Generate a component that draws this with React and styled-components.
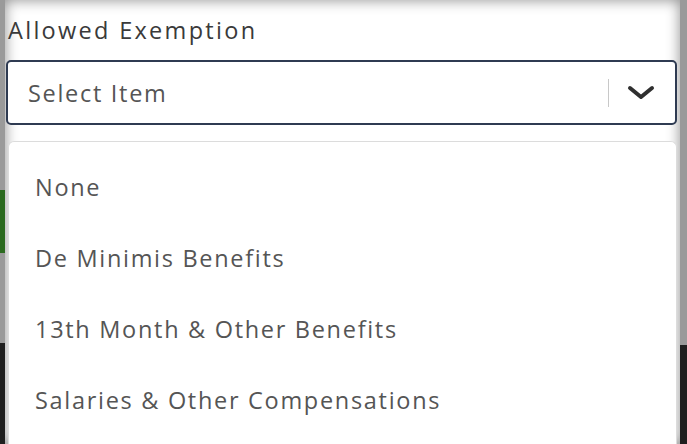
import React from 'react';
import styled, { createGlobalStyle } from 'styled-components';

const options = [
  'None',
  'De Minimis Benefits',
  '13th Month & Other Benefits',
  'Salaries & Other Compensations',
];

const GlobalStyle = createGlobalStyle`
  html, body {
    margin: 0;
    padding: 0;
    background: #222;
  }
  body {
    font-family: "Open Sans", Lato, sans-serif;
  }
`;

const App = () => {
  return (
    <>
      <GlobalStyle />
      <Frame>
        <EdgeStrip>
          <EdgeSegment tone="#9a9a9a" size="190px" />
          <EdgeSegment tone="#2b6a1f" size="63px" />
          <EdgeSegment tone="#9a9a9a" size="90px" />
          <EdgeSegment tone="#1f1f1f" size="1fr" />
        </EdgeStrip>
        <Panel>
          <Label>Allowed Exemption</Label>
          <SelectBox>
            <Placeholder>Select Item</Placeholder>
            <Divider />
            <ChevronWrap>
              <svg width="28" height="16" viewBox="0 0 28 16">
                <path
                  d="M3 3 L14 12 L25 3"
                  fill="none"
                  stroke="#2f2f2f"
                  strokeWidth="4"
                  strokeLinecap="round"
                  strokeLinejoin="round"
                />
              </svg>
            </ChevronWrap>
          </SelectBox>
          <Menu>
            {options.map(option => (
              <MenuItem key={option}>{option}</MenuItem>
            ))}
          </Menu>
        </Panel>
        <EdgeStrip>
          <EdgeSegment tone="#9a9a9a" size="345px" />
          <EdgeSegment tone="#1f1f1f" size="1fr" />
        </EdgeStrip>
      </Frame>
    </>
  );
};

const Frame = styled.div`
  display: grid;
  grid-template-columns: 5px 1fr 7px;
  width: 687px;
  height: 444px;
  overflow: hidden;
`;

const EdgeStrip = styled.div`
  display: flex;
  flex-direction: column;
`;

const EdgeSegment = styled.div`
  background: ${props => props.tone};
  flex: ${props => (props.size === '1fr' ? '1' : `0 0 ${props.size}`)};
`;

const Panel = styled.div`
  display: flex;
  flex-direction: column;
  padding: 15px 3px 0 1px;
  background: #fff;
  box-shadow: inset 0 0 14px rgba(0, 0, 0, 0.45);
  overflow: hidden;
`;

const Label = styled.div`
  padding-left: 2px;
  font-size: 23.5px;
  line-height: 30px;
  color: #3a3a3a;
  letter-spacing: 2.3px;
`;

const SelectBox = styled.div`
  display: flex;
  align-items: center;
  height: 61px;
  margin-top: 15px;
  padding: 0 20px 0 20px;
  border: 2px solid #2f3b52;
  border-radius: 5px;
  background: #fff;
`;

const Placeholder = styled.span`
  flex: 1;
  font-size: 23.5px;
  color: #555;
  letter-spacing: 1.7px;
`;

const Divider = styled.span`
  width: 1px;
  height: 28px;
  background: #c8c8c8;
`;

const ChevronWrap = styled.span`
  display: flex;
  margin-left: 18px;
`;

const Menu = styled.div`
  display: flex;
  flex-direction: column;
  flex: 1;
  margin: 16px 0 0 2px;
  padding-top: 9px;
  border: 1px solid #dcdcdc;
  border-bottom: none;
  border-radius: 6px 6px 0 0;
  background: #fff;
`;

const MenuItem = styled.div`
  display: flex;
  align-items: center;
  height: 71px;
  padding-left: 26px;
  font-size: 23.5px;
  color: #555;
  letter-spacing: 1.7px;
`;

export default App;
